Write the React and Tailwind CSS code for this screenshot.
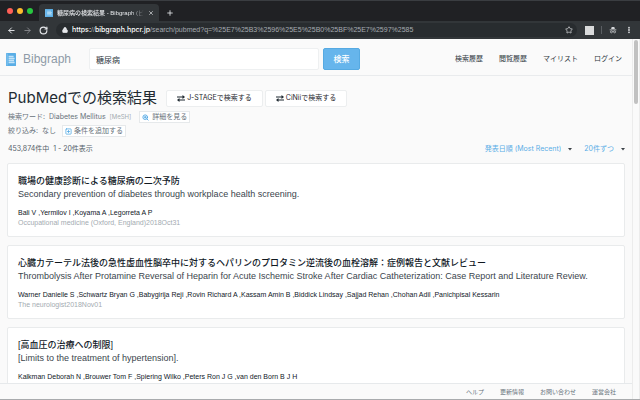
import {
  ArrowLeft,
  ArrowRight,
  EllipsisVertical,
  Lock,
  Plus,
  RotateCw,
  SquarePlus,
  Star,
  X,
  ZoomIn,
} from "lucide-react";

const results = [
  {
    title: "職場の健康診断による糖尿病の二次予防",
    original: "Secondary prevention of diabetes through workplace health screening.",
    authors: "Bali V ,Yermilov I ,Koyama A ,Legorreta A P",
    source: "Occupational medicine (Oxford, England)2018Oct31",
  },
  {
    title: "心臓カテーテル法後の急性虚血性脳卒中に対するヘパリンのプロタミン逆流後の血栓溶解：症例報告と文献レビュー",
    original:
      "Thrombolysis After Protamine Reversal of Heparin for Acute Ischemic Stroke After Cardiac Catheterization: Case Report and Literature Review.",
    authors:
      "Warner Danielle S ,Schwartz Bryan G ,Babygirija Reji ,Rovin Richard A ,Kassam Amin B ,Biddick Lindsay ,Sajjad Rehan ,Chohan Adil ,Panichpisal Kessarin",
    source: "The neurologist2018Nov01",
  },
  {
    title: "[高血圧の治療への制限]",
    original: "[Limits to the treatment of hypertension].",
    authors: "Kalkman Deborah N ,Brouwer Tom F ,Spiering Wilko ,Peters Ron J G ,van den Born B J H",
    source: "",
  },
];

function BookIcon({ className }) {
  return (
    <svg viewBox="0 0 10 13" className={className} aria-hidden="true" preserveAspectRatio="none">
      <rect width="10" height="13" rx="0.6" fill="#5aaee6" />
      <rect x="0.6" y="0.6" width="1" height="11.8" fill="#86c6ef" />
      <path d="M2.6 3.5h5M2.6 5.5h6M2.6 7.5h5.4M2.6 9.5h6" stroke="#c3e3f8" strokeWidth="1.3" />
    </svg>
  );
}

function ExchangeIcon() {
  return (
    <svg viewBox="0 0 16 14" className="h-[7px] w-2" fill="currentColor" aria-hidden="true">
      <path d="M0 3h11V0l5 4-5 4V5H0zM16 9H5V6L0 10l5 4v-3h11z" />
    </svg>
  );
}

function IncognitoIcon({ className }) {
  return (
    <svg viewBox="0 0 12 12" className={className} aria-hidden="true" fill="#d5d7da">
      <path d="M3.2 4.6 4 1.6h4l.8 3zM1 5.2h10v1H1z" />
      <circle cx="3.6" cy="8.8" r="1.5" fill="none" stroke="#d5d7da" />
      <circle cx="8.4" cy="8.8" r="1.5" fill="none" stroke="#d5d7da" />
      <path d="M5 8.2h2v.8H5z" />
    </svg>
  );
}

function BrowserChrome() {
  return (
    <div className="shrink-0 border-t border-[#3a3d41] bg-[#202124] font-['Liberation_Sans','Noto_Sans_CJK_JP',sans-serif] text-[#e8eaed]">
      <div className="flex h-5 items-end">
        <div className="flex h-4 items-center gap-1 pb-1 pl-[7px]">
          <span className="size-[6px] rounded-full bg-[#ff5f57]" />
          <span className="size-[6px] rounded-full bg-[#febc2e]" />
          <span className="size-[6px] rounded-full bg-[#28c840]" />
        </div>
        <div className="ml-[6px] flex h-[17px] w-[120px] items-center rounded-t bg-[#323639] pr-[5px] pl-[6px]">
          <BookIcon className="size-2 shrink-0" />
          <span className="ml-1 min-w-0 flex-1 mask-r-from-85% text-[6px] leading-3 font-medium whitespace-nowrap">
            糖尿病の検索結果 - Bibgraph (ビ
          </span>
          <button aria-label="タブを閉じる" className="ml-1">
            <X className="size-[6px]" strokeWidth={2.5} />
          </button>
        </div>
        <button aria-label="新しいタブ" className="mb-1 ml-[7px]">
          <Plus className="size-2" strokeWidth={2.5} />
        </button>
      </div>
      <div className="flex h-[18px] items-center bg-[#323639] pr-[7px] pl-[7px]">
        <button aria-label="戻る">
          <ArrowLeft className="size-[9px]" strokeWidth={2.5} />
        </button>
        <button aria-label="進む" className="ml-[7px] text-[#85888c]">
          <ArrowRight className="size-[9px]" strokeWidth={2.5} />
        </button>
        <button aria-label="再読み込み" className="ml-[7px]">
          <RotateCw className="size-[9px]" strokeWidth={3} />
        </button>
        <div className="ml-2 flex h-[14px] min-w-0 flex-1 items-center rounded-full bg-[#282c2f] pr-1 pl-[6px]">
          <Lock className="size-[6px] shrink-0 fill-current" strokeWidth={3} />
          <p className="ml-1 flex-1 overflow-hidden text-[7px] leading-3 whitespace-nowrap text-[#a6abb0]">
            <span className="font-[Inter] font-medium text-white">https:</span>//
            <span className="font-[Inter] font-medium text-white">bibgraph.hpcr.jp</span>
            /search/pubmed?q=%25E7%25B3%2596%25E5%25B0%25BF%25E7%2597%2585
          </p>
          <button aria-label="ブックマーク">
            <Star className="size-2" strokeWidth={2} />
          </button>
        </div>
        <span className="ml-2 size-[9px] bg-[#d9dadb]" />
        <span className="ml-[7px] h-2 w-px bg-[#5b5f63]" />
        <IncognitoIcon className="ml-[7px] size-2" />
        <button aria-label="メニュー" className="ml-2">
          <EllipsisVertical className="size-2" strokeWidth={3.5} />
        </button>
      </div>
    </div>
  );
}

function SiteHeader() {
  return (
    <header className="flex h-[37px] shrink-0 items-center border-b border-[#e9ebed] pt-1 pr-[10px] pl-[6px]">
      <a
        href="#top"
        className="flex w-[83px] items-center gap-[7px] font-['Liberation_Sans',sans-serif] text-[12px] leading-4 text-[#8e9ba7]"
      >
        <BookIcon className="h-[13px] w-[10px]" />
        Bibgraph
      </a>
      <form className="flex gap-1">
        <input
          aria-label="検索ワード"
          defaultValue="糖尿病"
          className="h-[22px] w-[230px] rounded-xs border border-[#eef0f1] bg-white px-[6px] text-[8px] text-[#2b343c] outline-none"
        />
        <button
          type="button"
          className="h-[22px] w-[37px] rounded-xs border border-[#56aae2] bg-[#66b5ec] text-[8px] font-medium text-white"
        >
          検索
        </button>
      </form>
      <nav className="ml-auto flex gap-4 text-[7px] leading-3 text-[#2f373e]">
        <a href="#history">検索履歴</a>
        <a href="#views">閲覧履歴</a>
        <a href="#mylist">マイリスト</a>
        <a href="#login">ログイン</a>
      </nav>
    </header>
  );
}

function SortSelect({ label, value }) {
  return (
    <label className="flex items-center gap-[7px]">
      <select
        aria-label={label}
        className="field-sizing-content appearance-none bg-transparent text-[7px] leading-3 text-[#5aaee6] outline-none"
      >
        <option>{value}</option>
      </select>
      <svg viewBox="0 0 4 3" className="h-[3px] w-1" fill="#3c4248" aria-hidden="true">
        <path d="M0 0h4L2 2.6z" />
      </svg>
    </label>
  );
}

function ResultCard({ title, original, authors, source }) {
  return (
    <article className="h-[74px] shrink-0 rounded-xs border border-[#e9ebec] bg-white px-[10px] pt-[10px] font-['Liberation_Sans','Noto_Sans_CJK_JP',sans-serif]">
      <h2 className="text-[9px] leading-[14px] font-medium whitespace-nowrap text-[#10181f]">{title}</h2>
      <p className="text-[9px] leading-[13px] whitespace-nowrap text-[#3b454d]">{original}</p>
      <p className="mt-[7px] text-[7px] leading-[10px] whitespace-nowrap text-[#10181f]">{authors}</p>
      <p className="text-[7px] leading-[10px] text-[#a3abb1]">{source}</p>
    </article>
  );
}

function ResultsPage() {
  return (
    <main className="flex min-h-0 flex-1 flex-col overflow-hidden px-[7px]">
      <div className="mt-3 flex shrink-0 items-center gap-[2px] px-px">
        <h1 className="mr-[7px] text-[15px] leading-5 text-[#222b32]">PubMedでの検索結果</h1>
        <button className="flex h-[17px] items-center gap-[2px] rounded-xs border border-[#eceeef] bg-white px-[10px] text-[7px] text-[#1f2930]">
          <ExchangeIcon />
          J-STAGEで検索する
        </button>
        <button className="flex h-[17px] items-center gap-[2px] rounded-xs border border-[#eceeef] bg-white px-[10px] text-[7px] text-[#1f2930]">
          <ExchangeIcon />
          CiNiiで検索する
        </button>
      </div>
      <div className="mt-[3px] flex h-3 shrink-0 items-center px-px text-[7px] leading-3 text-[#68727a]">
        検索ワード:&nbsp; Diabetes Mellitus
        <span className="ml-1 text-[6px] text-[#a3abb1]">[MeSH]</span>
        <button className="ml-2 flex h-3 items-center gap-[3px] border border-[#e6e9eb] bg-white px-[2px]">
          <ZoomIn className="size-[7px] text-[#4aa5e4]" strokeWidth={3} />
          詳細を見る
        </button>
      </div>
      <div className="mt-[2px] flex h-3 shrink-0 items-center px-px text-[7px] leading-3 text-[#68727a]">
        絞り込み:&nbsp; なし
        <button className="ml-[6px] flex h-3 items-center gap-[2px] border border-[#e6e9eb] bg-white px-[2px]">
          <SquarePlus className="size-[7px] text-[#4aa5e4]" strokeWidth={2.5} />
          条件を追加する
        </button>
      </div>
      <div className="mt-[6px] flex h-3 shrink-0 items-center gap-3 pl-px text-[7px] leading-3 text-[#56616a]">
        <p className="mr-auto">453,874件中&nbsp; 1 - 20件表示</p>
        <SortSelect label="並び順" value="発表日順 (Most Recent)" />
        <SortSelect label="表示件数" value="20件ずつ" />
      </div>
      <div className="mt-2 flex flex-col gap-2">
        {results.map((result) => (
          <ResultCard key={result.title} {...result} />
        ))}
      </div>
    </main>
  );
}

export default function App() {
  return (
    <div
      lang="ja"
      className="flex h-screen flex-col overflow-hidden border-b border-[#a9abad] bg-[#fafafa] font-[Inter,'Noto_Sans_CJK_JP',sans-serif]"
    >
      <BrowserChrome />
      <div className="flex min-h-0 flex-1">
        <div className="flex min-w-0 flex-1 flex-col">
          <SiteHeader />
          <ResultsPage />
          <footer className="flex h-4 shrink-0 items-center justify-end gap-4 border-t border-[#e6e9eb] pr-4 text-[6px] leading-3 text-[#68727a]">
            <a href="#help">ヘルプ</a>
            <a href="#news">更新情報</a>
            <a href="#contact">お問い合わせ</a>
            <a href="#company">運営会社</a>
          </footer>
        </div>
        <div className="w-2 shrink-0 border-x border-[#ececec] bg-[#fafafa] pt-px">
          <div className="mx-px h-16 rounded-full bg-[#c1c1c1]" />
        </div>
      </div>
    </div>
  );
}
